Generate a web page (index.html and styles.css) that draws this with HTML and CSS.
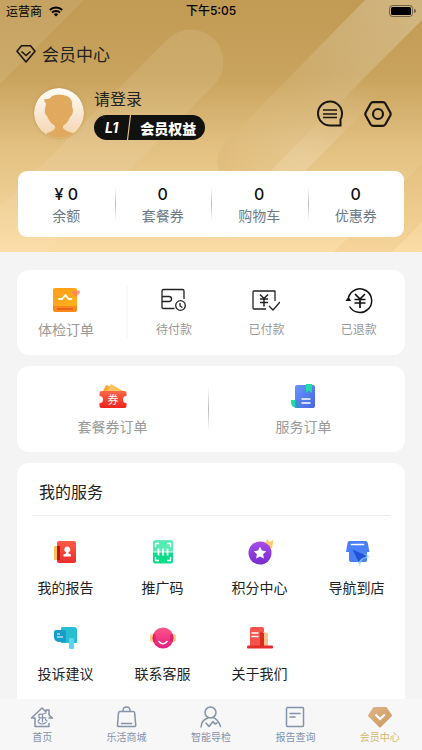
FILE: index.html
```html
<!DOCTYPE html>
<html lang="zh-CN">
<head>
<meta charset="utf-8">
<meta name="viewport" content="width=device-width, initial-scale=1">
<title>会员中心</title>
<link rel="stylesheet" href="styles.css">
</head>
<body>
<header class="hero">
  <svg class="hero-art" viewBox="0 0 422 252" preserveAspectRatio="none" aria-hidden="true">
    <defs>
      <linearGradient id="bandFade" gradientUnits="userSpaceOnUse" x1="400" y1="10" x2="235" y2="175"><stop offset="0" stop-color="#fff" stop-opacity=".24"/><stop offset=".6" stop-color="#fff" stop-opacity=".07"/><stop offset="1" stop-color="#c79a50" stop-opacity=".16"/></linearGradient>
      <linearGradient id="bandSoft" x1="0" y1="0" x2="0" y2="1"><stop offset="0" stop-color="#fff" stop-opacity=".1"/><stop offset=".5" stop-color="#fff" stop-opacity=".07"/><stop offset="1" stop-color="#fff" stop-opacity=".04"/></linearGradient>
      <linearGradient id="bandRise" gradientUnits="userSpaceOnUse" x1="370" y1="85" x2="215" y2="240"><stop offset="0" stop-color="#fff" stop-opacity="0"/><stop offset=".45" stop-color="#fff" stop-opacity=".16"/><stop offset="1" stop-color="#fff" stop-opacity="0"/></linearGradient>
    </defs>
    <path fill="#fff" fill-opacity=".08" d="M0 0H84L0 84Z"/>
    <path fill="url(#bandSoft)" d="M0 207L168 39A32 32 0 0 1 214 85L47 252H0Z"/>
    <path fill="url(#bandFade)" d="M365 0H422V20L262 180A26 26 0 0 1 225 143Z"/>
    <path fill="url(#bandRise)" d="M370 71L405 71L224 252H190Z"/>
    <path fill="#d9a95c" fill-opacity=".14" d="M422 164V222L392 252H334Z"/>
  </svg>

  <div class="status">
    <span class="carrier">运营商
      <svg width="14" height="11" viewBox="0 0 14 11" aria-hidden="true"><g fill="none" stroke="#000" stroke-width="2"><path d="M.8 4A9 9 0 0 1 13.2 4"/><path d="M3 6.600A5.800 5.800 0 0 1 11 6.600"/></g><path d="M4.900 8.400A3 3 0 0 1 9.100 8.400L7 10.600Z"/></svg>
    </span>
    <time class="clock">下午5:05</time>
    <svg class="battery" width="27" height="12" viewBox="0 0 27 12" role="img" aria-label="电量"><rect x=".5" y=".5" width="23" height="11" rx="3" fill="none" stroke="#000" stroke-opacity=".45"/><rect x="2" y="2" width="20" height="8" rx="1.500"/><path d="M25 4a2 2 0 0 1 0 4z" fill-opacity=".45"/></svg>
  </div>

  <h1 class="title">
    <svg width="20" height="20" viewBox="0 0 20 20" aria-hidden="true"><g fill="none" stroke="#1b1710" stroke-width="1.600" stroke-linejoin="round"><path d="M5.500 1.800h9L19 7.200 10 18 1 7.200Z"/><path d="M5.500 7.500L10 11.500l4.500-4"/></g></svg>
    会员中心
  </h1>

  <div class="profile">
    <svg class="avatar" width="50" height="50" viewBox="0 0 50 50" aria-hidden="true">
      <defs><linearGradient id="face" x1="0" y1="0" x2="0" y2="1"><stop offset="0" stop-color="#fffdf8"/><stop offset="1" stop-color="#f4d3ad"/></linearGradient><clipPath id="disc"><circle cx="25" cy="25" r="25"/></clipPath></defs>
      <circle cx="25" cy="25" r="25" fill="url(#face)"/>
      <path clip-path="url(#disc)" fill="#e0a95d" d="M10 11Q15 12 18 8Q25 5 33 8Q39 11 38 18L39 22Q39 27 36 29Q34 35 29 38V40Q31 43 39 45V50H13V45Q20 43 21 40V38Q15 34 13 28Q10 26 11 21L12 15Q10 14 10 11Z"/>
    </svg>
    <div class="who">
      <a class="login" href="#login">请登录</a>
      <a class="badge" href="#benefits"><em>L1</em><svg width="6" height="25" viewBox="0 0 6 25" aria-hidden="true"><path d="M4.500 0L1.500 25" stroke="#e4bd7c" stroke-width="1.200"/></svg><strong>会员权益</strong></a>
    </div>
    <div class="tools">
      <button type="button" aria-label="消息"><svg width="28" height="28" viewBox="0 0 28 28"><g fill="none" stroke="#1b1710"><path stroke-width="2" d="M24.500 25.500H14A12 12 0 1 1 26 14Q26 17 24.500 19.500Z"/><path stroke-width="1.400" d="M7 10h14M7 14h14M7 17.500h14"/></g></svg></button>
      <button type="button" aria-label="设置"><svg width="28" height="28" viewBox="0 0 28 28"><g fill="none" stroke="#1b1710" stroke-width="2.200"><path stroke-linejoin="round" d="M9 2.200H19Q20.500 2.200 21.300 3.500L26.300 12.500Q27 14 26.300 15.500L21.300 24.500Q20.500 25.800 19 25.800H9Q7.500 25.800 6.700 24.500L1.700 15.500Q1 14 1.700 12.500L6.700 3.500Q7.500 2.200 9 2.200Z"/><circle cx="14" cy="14" r="5"/></g></svg></button>
    </div>
  </div>

  <div class="stats">
    <a href="#balance"><b>¥ 0</b><span>余额</span></a>
    <a href="#coupons"><b>0</b><span>套餐券</span></a>
    <a href="#cart"><b>0</b><span>购物车</span></a>
    <a href="#discounts"><b>0</b><span>优惠券</span></a>
  </div>
</header>

<main class="content">
  <section class="card orders" aria-label="体检订单">
    <a class="main-order" href="#orders">
      <svg width="28" height="28" viewBox="0 0 28 28" aria-hidden="true"><defs><linearGradient id="or" x1="0" y1="0" x2="1" y2="1"><stop stop-color="#ff9d18"/><stop offset="1" stop-color="#ffb21c"/></linearGradient></defs><rect x="1" y="17" width="24" height="9" rx="2" fill="#f98a18"/><path d="M5 23h16" stroke="#e5671d" stroke-width="2"/><rect x="1" y="2" width="24" height="18" rx="2" fill="url(#or)"/><path d="M7 13h3l3.500-4 3 4h3" fill="none" stroke="#fff" stroke-width="1.800" stroke-linecap="round" stroke-linejoin="round"/><path fill="#ff8067" fill-opacity=".75" d="M24 11l-4-4q-1-2 1-2.500 2-.2 3 1 1-1.200 3-1 1.800.5 1 2.500z"/></svg>
      <span>体检订单</span></a>
    <i class="rule"></i>
    <a href="#unpaid"><svg width="28" height="28" viewBox="0 0 28 28" aria-hidden="true"><g fill="none" stroke="#222" stroke-width="1.300" stroke-linejoin="round"><path d="M14.500 22.500H3.500q-1.500 0-1.500-1.500V5q0-1.500 1.500-1.500h19q1.500 0 1.500 1.500v8M2 10.500h7q2.500 0 2.500 2.500t-2.500 2.500H2"/><circle cx="20.500" cy="19.500" r="4.800"/><path d="M20 17v3l2.500 1.500"/></g></svg><span>待付款</span></a>
    <a href="#paid"><svg width="28" height="28" viewBox="0 0 28 28" aria-hidden="true"><g fill="none" stroke="#222" stroke-width="1.300" stroke-linejoin="round"><path d="M14 23H2q-1 0-1-1V6q0-1 1-1h21v10M17 20l4 4 7-8"/><path stroke-width="1.500" d="M8 8.500l4 4 4-4M12 12.500v8M8 13h8M8 16.500h8"/></g></svg><span>已付款</span></a>
    <a href="#refunded"><svg width="28" height="28" viewBox="0 0 28 28" aria-hidden="true"><g fill="none" stroke="#111" stroke-width="1.500"><path d="M4.600 20.500A11.800 11.800 0 1 0 3.500 11.500"/><path stroke-width="1.700" d="M10 8l5 5 5-5M15 13v9M9.500 13.500h11M9.500 17h11"/></g><path fill="#111" d="M.5 15L3.500 10.500l2.500 4.500z"/></svg><span>已退款</span></a>
  </section>

  <section class="card pair" aria-label="其他订单">
    <a href="#coupon-orders"><svg width="28" height="28" viewBox="0 0 28 28" aria-hidden="true"><defs><linearGradient id="tk" x1="0" y1="0" x2="0" y2="1"><stop stop-color="#ff674b"/><stop offset="1" stop-color="#ee231e"/></linearGradient></defs><path fill="#f9a735" d="M4 9L7 3l15 6z"/><path fill="#ffc45d" d="M8 9l4-7 12 7z"/><path fill="url(#tk)" d="M2.500 9h23q2 0 2 2v3a3.500 3.500 0 0 0 0 7v3q0 2-2 2h-23q-2 0-2-2v-3a3.500 3.500 0 0 0 0-7v-3q0-2 2-2z"/><text class="ticket-text" x="14" y="21.500" text-anchor="middle">券</text></svg><span>套餐券订单</span></a>
    <a href="#service-orders"><svg width="28" height="28" viewBox="0 0 28 28" aria-hidden="true"><defs><linearGradient id="bk" x1="0" y1="0" x2="1" y2="1"><stop stop-color="#6596ff"/><stop offset="1" stop-color="#4964df"/></linearGradient></defs><rect x="5" y="3" width="20" height="23" rx="2" fill="url(#bk)"/><path fill="#21dca7" d="M16 2h6v9l-3-2.500-3 2.500zM1 18h5v8q-5-1-5-6z"/><path fill="#269bc0" d="M5 18h1q4 2 3 8H6q-1 0-1-1z" opacity=".65"/><path d="M11.500 17h9M11.500 21h9" stroke="#fff" stroke-width="1.600"/></svg><span>服务订单</span></a>
  </section>

  <section class="card services">
    <h2>我的服务</h2>
    <div class="grid">
      <a href="#reports"><svg width="28" height="28" viewBox="0 0 28 28" aria-hidden="true"><defs><linearGradient id="rp" x1="0" y1="0" x2="0" y2="1"><stop stop-color="#ff5a48"/><stop offset="1" stop-color="#e92e2c"/></linearGradient></defs><rect x="2" y="8" width="7" height="14" rx="1" fill="#ffbe56"/><rect x="5" y="3" width="19" height="22" rx="2" fill="url(#rp)"/><path fill="#b9150f" d="M5 8h3v14H5z"/><path fill="#fff" d="M11.500 18.500v-2l2.500-1v-1.200a3 3 0 1 1 2.500 0v1.200l2.500 1v2z"/></svg><span>我的报告</span></a>
      <a href="#promo"><svg width="28" height="28" viewBox="0 0 28 28" aria-hidden="true"><rect x="4" y="2.500" width="20" height="23" rx="2" fill="#0bdc8a"/><path fill="#57ebb4" d="M4 14V4.500q0-2 2-2h16q2 0 2 2V14z"/><g fill="none" stroke="#fff" stroke-width="1.300"><path d="M6.500 9V5.500H10M18 5.500h3.500V9M6.500 19v3.500H10M18 22.500h3.500V19"/><path stroke-width=".8" d="M3.500 14h21"/><path stroke-width="1.800" d="M9.500 10.500v7M14 10.500v7M18.500 10.500v7"/></g></svg><span>推广码</span></a>
      <a href="#points"><svg width="28" height="28" viewBox="0 0 28 28" aria-hidden="true"><defs><linearGradient id="pt" x1="0" y1="0" x2="0" y2="1"><stop stop-color="#a64de8"/><stop offset="1" stop-color="#772dcc"/></linearGradient></defs><path fill="#ffcb68" d="M19 6l2-5 2.500 3 4-2-1.500 8-4 1z"/><circle cx="14" cy="15" r="11.500" fill="url(#pt)"/><path fill="#fff" d="M14 8.800l1.900 3.800 4.300.6-3.100 3 .8 4.200-3.900-2-3.900 2 .8-4.200-3.100-3 4.300-.6z"/></svg><span>积分中心</span></a>
      <a href="#navigate"><svg width="28" height="28" viewBox="0 0 28 28" aria-hidden="true"><path fill="#4a80f5" d="M6.500 3h16q2 0 2.300 2l1.700 9H24v8q0 2-2 2H8q-2 0-2-2v-8H3L4.500 5q.3-2 2-2z"/><path d="M8.500 6.500h1.500M11.500 6.500h9" stroke="#fff" stroke-width="1.700" stroke-linecap="round"/><path fill="#89ceff" fill-opacity=".7" d="M22 15.500l5 3.200-7 2.300-3.500 7-2-5z"/><path fill="#2451d5" d="M9.500 11.500L24 18l-5.500 2.500L15.500 24z"/></svg><span>导航到店</span></a>
      <a href="#feedback"><svg width="28" height="28" viewBox="0 0 28 28" aria-hidden="true"><path fill="#28bed2" d="M10 3h12q3 0 3 3v13H9V5q0-2 1-2z"/><rect x="17" y="14" width="5" height="11" rx="1" fill="#60d2f5"/><path fill="#179ec8" d="M4 6h8q2 0 2 2v10H8q-6 0-6-5V8q0-2 2-2z"/><path stroke="#fff" stroke-width="1.200" d="M5 10h3M5 13h6"/></svg><span>投诉建议</span></a>
      <a href="#support"><svg width="28" height="28" viewBox="0 0 28 28" aria-hidden="true"><defs><linearGradient id="cs" x1="0" y1="0" x2="0" y2="1"><stop stop-color="#ff568b"/><stop offset="1" stop-color="#e41d7d"/></linearGradient></defs><rect x="1" y="10" width="26" height="8" rx="2" fill="#ffce87"/><circle cx="14" cy="14" r="10.500" fill="url(#cs)"/><path fill="#d91852" opacity=".65" d="M4.300 10h1q1.700 0 1.700 4t-1.700 4h-1q-1.600-4 0-8zM23.700 10h-1q-1.700 0-1.700 4t1.700 4h1q1.600-4 0-8z"/><path d="M10 17.500q4 4.500 8 0" fill="none" stroke="#fff" stroke-width="1.500" stroke-linecap="round"/></svg><span>联系客服</span></a>
      <a href="#about"><svg width="28" height="28" viewBox="0 0 28 28" aria-hidden="true"><path fill="#f6534c" d="M6 3h10q2 0 2 2v18H4V5q0-2 2-2z"/><path fill="#ffc28c" d="M17 8l5 1v13h-5z"/><path fill="#d92b20" d="M14 8l4 1v13h-4z"/><rect x="1" y="21.500" width="26" height="3" rx="1" fill="#e32d2b"/><path d="M5.500 9h7M5.500 12.500h7" stroke="#fff" stroke-width="1.400"/></svg><span>关于我们</span></a>
    </div>
  </section>
</main>

<nav class="tabs" aria-label="主导航">
  <a href="#home"><svg width="24" height="24" viewBox="0 0 24 24" aria-hidden="true"><g class="line"><path d="M5 13H1.500L12 3l4 4V5h3v5l3.500 3H19M5 13v8.500h14v-3"/><path stroke-width="1.200" d="M16 8q-4 1.500-7 1.300v3.500h7M12.500 9.500v7.500M9.500 14.500L8 16M15.500 14.500L17 16M8.500 17.500q3.500 3 7.500 0"/></g></svg><span>首页</span></a>
  <a href="#mall"><svg width="24" height="24" viewBox="0 0 24 24" aria-hidden="true"><g class="line"><path d="M5 6.500h13q1.500 0 1.700 1.500l1 12q.1 1.500-1.500 1.500H4q-1.600 0-1.500-1.500l1-12Q3.700 6.500 5 6.500zM8 6.500Q7.500 2 11.500 2t3.500 4.500M6.500 18.500h10"/></g></svg><span>乐活商城</span></a>
  <a href="#guide"><svg width="24" height="24" viewBox="0 0 24 24" aria-hidden="true"><g class="line"><circle cx="11.500" cy="7.500" r="5.500"/><path d="M2 22q.5-7 7-9M14 12.500q5 1.500 7.500 9M7 18l3 3.500 4-5 2 2.500 2-1"/></g></svg><span>智能导检</span></a>
  <a href="#query"><svg width="24" height="24" viewBox="0 0 24 24" aria-hidden="true"><g class="line"><rect x="3.500" y="2.500" width="17" height="19" rx="1"/><path d="M7 8.500h10M7 12h5"/></g></svg><span>报告查询</span></a>
  <a class="active" href="#member" aria-current="page"><svg width="24" height="24" viewBox="0 0 24 24" aria-hidden="true"><defs><linearGradient id="gem" x1="0" y1="0" x2="1" y2="1"><stop stop-color="#dfb484"/><stop offset="1" stop-color="#cc9960"/></linearGradient></defs><path fill="url(#gem)" stroke="url(#gem)" stroke-width="2" stroke-linejoin="round" d="M6 3h12l5 7.500L12 21.500 1 10.500z"/><path d="M7.500 9.500L12 14l5-4.500" fill="none" stroke="#fff" stroke-width="2"/></svg><span>会员中心</span></a>
</nav>
</body>
</html>
```
FILE: styles.css
```css
* { box-sizing: border-box; }

body {
  margin: 0;
  min-height: 100vh;
  display: flex;
  flex-direction: column;
  background: #f4f4f4;
  color: #222;
  font-family: "Noto Sans CJK SC", sans-serif;
  font-size: 14px;
  line-height: 20px;
}

a { color: inherit; text-decoration: none; }
svg { display: block; flex: none; }

.hero {
  position: relative;
  isolation: isolate;
  padding: 0 18px 15px;
  background: linear-gradient(#c19b54, #c8a35d 30%, #e2c081 58%, #fbdca5);
}
.hero-art {
  position: absolute;
  inset: 0;
  z-index: -1;
  width: 100%;
  height: 100%;
}

.status {
  display: grid;
  grid-template-columns: 1fr auto 1fr;
  align-items: center;
  height: 22px;
  margin: 0 -12px;
  color: #000;
  font-size: 12px;
}
.carrier { display: flex; align-items: center; gap: 7px; }
.clock { font-family: Inter, "Noto Sans CJK SC", sans-serif; font-weight: 500; font-size: 12px; }
.battery { justify-self: end; }

.title {
  display: flex;
  align-items: center;
  gap: 6px;
  margin: 20px -2px 0;
  font-size: 17px;
  line-height: 24px;
  font-weight: 400;
}

.profile {
  display: flex;
  align-items: center;
  gap: 10px;
  margin: 20px 12px 0 16px;
}
.avatar { border-radius: 50%; box-shadow: 0 0 3px #a9814799; }
.who { display: flex; flex-direction: column; gap: 5px; }
.login { font-size: 16px; line-height: 24px; }
.badge {
  display: flex;
  align-items: center;
  gap: 8px;
  height: 25px;
  padding: 0 9px 0 11px;
  border-radius: 13px;
  background: #11110f;
  color: #fff;
}
.badge em { font: italic 700 14px/20px Inter, sans-serif; }
.badge strong { font-weight: 900; }
.tools { display: flex; gap: 20px; margin-left: auto; padding-top: 2px; }
.tools button { padding: 0; border: 0; background: none; }

.stats {
  display: grid;
  grid-template-columns: repeat(4, 1fr);
  margin-top: 31px;
  padding: 12px 0;
  border-radius: 9px;
  background: #fff;
}
.stats a {
  display: flex;
  flex-direction: column;
  align-items: center;
  color: #6b7a88;
}
.stats b { color: #111; font: 500 16px/22px Inter, sans-serif; }
.stats a + a,
.pair a + a {
  background: linear-gradient(#fff, #bbb, #fff) left center / 1px 34px no-repeat;
}

.content {
  flex: 1;
  display: flex;
  flex-direction: column;
  gap: 11px;
  padding: 18px 17px 0;
}
.card { border-radius: 12px; background: #fff; }
.card a {
  display: flex;
  flex-direction: column;
  align-items: center;
}

.orders {
  display: grid;
  grid-template-columns: 1.06fr .14fr 1fr 1fr 1fr;
  padding: 16px 0;
  color: #999;
  font-size: 12px;
}
.orders a { gap: 5px; }
.orders .main-order { font-size: 14px; }
.rule { justify-self: end; width: 2px; background: #f9f9f9; }

.pair {
  display: grid;
  grid-template-columns: 1fr 1fr;
  padding: 16px 6px 16px 0;
  color: #999;
}
.pair a { gap: 6px; }
.pair a + a { background-size: 1px 44px; }
.ticket-text { font-size: 11px; fill: #fff; }

.services { flex: 1; border-radius: 12px 12px 0 0; }
.services h2 {
  margin: 0 15px;
  padding: 16px 7px 12px;
  border-bottom: 1px solid #eee;
  font-size: 16px;
  line-height: 24px;
  font-weight: 400;
}
.grid {
  display: grid;
  grid-template-columns: repeat(4, 1fr);
  row-gap: 27px;
  padding: 22px 0 15px;
}
.grid a { gap: 11px; }

.tabs {
  position: sticky;
  bottom: 0;
  display: grid;
  grid-template-columns: repeat(5, 1fr);
  padding: 6px 0;
  background: #f7f7f7;
  color: #8492aa;
  font-size: 10px;
  line-height: 14px;
}
.tabs a {
  display: flex;
  flex-direction: column;
  align-items: center;
  gap: 1px;
}
.tabs .active { color: #d7b66e; }
.line {
  fill: none;
  stroke: #8492aa;
  stroke-width: 1.5px;
  stroke-linejoin: round;
  stroke-linecap: round;
}
```
